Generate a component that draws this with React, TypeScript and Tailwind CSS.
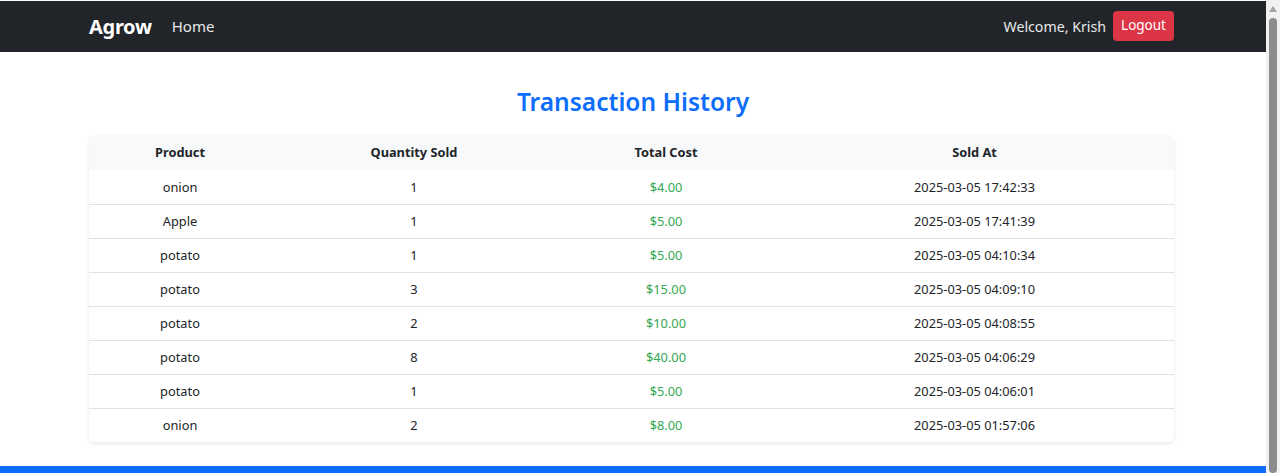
import React from 'react'

const font = { fontFamily: '"Noto Sans", "Open Sans", sans-serif' }

const rows = [
  { product: 'onion', qty: 1, cost: '$4.00', at: '2025-03-05 17:42:33' },
  { product: 'Apple', qty: 1, cost: '$5.00', at: '2025-03-05 17:41:39' },
  { product: 'potato', qty: 1, cost: '$5.00', at: '2025-03-05 04:10:34' },
  { product: 'potato', qty: 3, cost: '$15.00', at: '2025-03-05 04:09:10' },
  { product: 'potato', qty: 2, cost: '$10.00', at: '2025-03-05 04:08:55' },
  { product: 'potato', qty: 8, cost: '$40.00', at: '2025-03-05 04:06:29' },
  { product: 'potato', qty: 1, cost: '$5.00', at: '2025-03-05 04:06:01' },
  { product: 'onion', qty: 2, cost: '$8.00', at: '2025-03-05 01:57:06' }
]

const App: React.FC = () => {
  return (
    <div className="flex h-[473px] w-[1280px] overflow-hidden bg-white" style={font}>
      <div className="flex flex-1 flex-col">
        {/* navbar */}
        <nav className="mt-px flex h-[51px] items-center justify-between bg-[#212529] pl-[89px] pr-[92px]">
          <div className="flex items-center">
            <span className="text-[20px] font-bold tracking-[-0.3px] text-white">Agrow</span>
            <span className="ml-[20px] text-[15px] text-white/90">Home</span>
          </div>
          <div className="flex items-center">
            <span className="text-[14.2px] text-white/90">Welcome, Krish</span>
            <button className="ml-[7px] mb-[2px] h-[30px] rounded-[4px] bg-[#dc3545] px-[8px] text-[13.5px] text-white">
              Logout
            </button>
          </div>
        </nav>

        {/* content */}
        <main className="flex-1">
          <h3 className="mt-[33px] text-center text-[24.5px] font-semibold leading-[34px] text-[#0d6efd]">
            Transaction History
          </h3>
          <div className="ml-[89px] mt-[16px] w-[1085px] overflow-hidden rounded-[6px] shadow-[0_2px_4px_rgba(0,0,0,0.09)]">
            <table className="w-full table-fixed border-collapse text-center text-[12.8px] text-[#212529]">
              <colgroup>
                <col className="w-[182px]" />
                <col className="w-[286px]" />
                <col className="w-[218px]" />
                <col className="w-[399px]" />
              </colgroup>
              <thead>
                <tr className="h-[35px] bg-[#f8f9fa] font-semibold">
                  <th className="pt-px">Product</th>
                  <th className="pt-px">Quantity Sold</th>
                  <th className="pt-px">Total Cost</th>
                  <th className="pt-px">Sold At</th>
                </tr>
              </thead>
              <tbody>
                {rows.map((r, i) => (
                  <tr key={i} className={`h-[34px] ${i > 0 ? 'border-t border-[#dee2e6]' : ''}`}>
                    <td className="pt-px">{r.product}</td>
                    <td className="pt-px">{r.qty}</td>
                    <td className="pt-px text-[#34a853]">{r.cost}</td>
                    <td className="pt-px">{r.at}</td>
                  </tr>
                ))}
              </tbody>
            </table>
          </div>
        </main>

        {/* footer strip */}
        <div className="h-[7px] bg-[#0d6efd]" />
      </div>

      {/* browser scrollbar */}
      <div className="flex w-[14px] flex-col items-center bg-[#f1f1f1]">
        <svg width="8" height="6" viewBox="0 0 8 6" className="mt-[6px]">
          <path d="M4 0 L8 6 L0 6 Z" fill="#a3a3a3" />
        </svg>
        <div className="mt-[6px] w-[8px] flex-1 rounded-[4px] bg-[#8c8c8c]" />
      </div>
    </div>
  )
}

export default App
